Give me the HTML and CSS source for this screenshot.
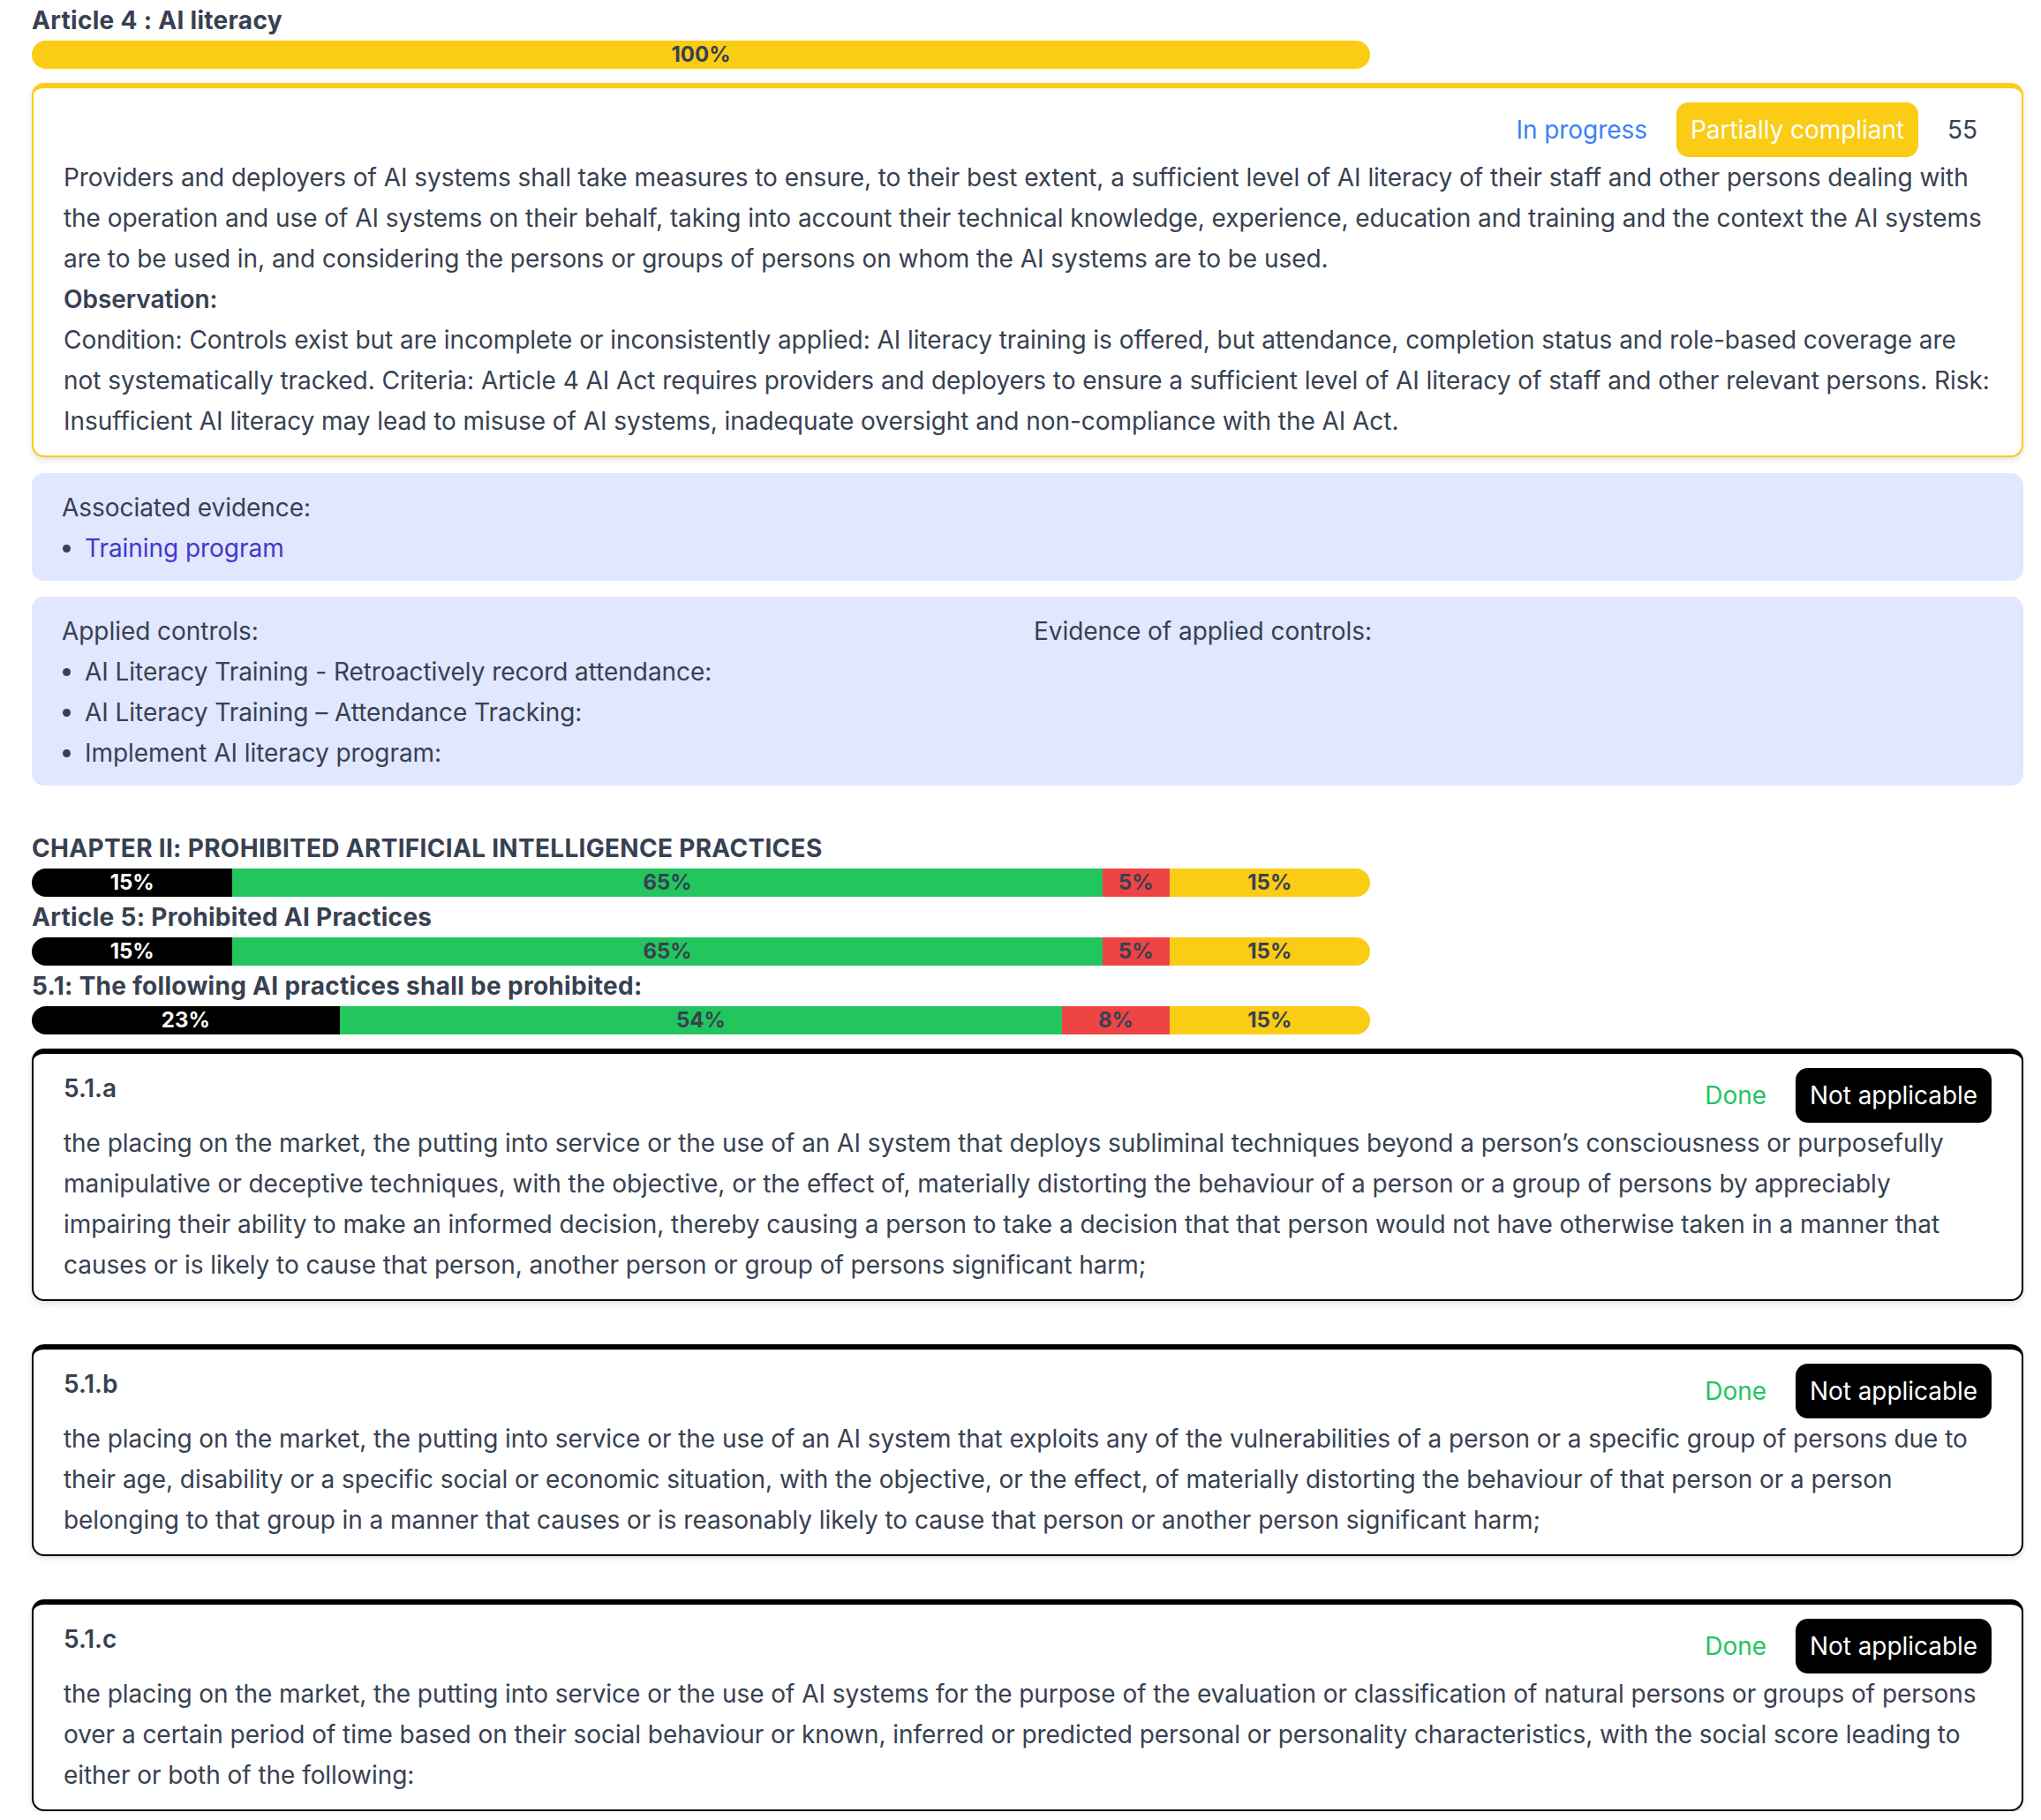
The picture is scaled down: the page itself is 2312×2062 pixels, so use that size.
FILE: index.html
```html
<!DOCTYPE html>
<html lang="en">
<head>
  <meta charset="UTF-8" />
  <meta name="viewport" content="width=device-width, initial-scale=1.0" />
  <title>AI Act audit</title>
  <link rel="stylesheet" href="styles.css">
</head>
<body>
  <div class="page">

    <div class="node">
      <h3 class="node-title">Article 4 : AI literacy</h3>
      <div class="progress">
        <div class="seg seg-yellow" style="width: 100%;">100%</div>
      </div>

      <div class="req-card req-yellow">
        <div class="req-head">
          <span class="ref-id"></span>
          <div class="badges">
            <span class="badge status-progress">In progress</span>
            <span class="badge result-partial">Partially compliant</span>
            <span class="badge score">55</span>
          </div>
        </div>
        <p>Providers and deployers of AI systems shall take measures to ensure, to their best extent, a sufficient level of AI literacy of their staff and other persons dealing with the operation and use of AI systems on their behalf, taking into account their technical knowledge, experience, education and training and the context the AI systems are to be used in, and considering the persons or groups of persons on whom the AI systems are to be used.</p>
        <p class="obs-label">Observation:</p>
        <p>Condition: Controls exist but are incomplete or inconsistently applied: AI literacy training is offered, but attendance, completion status and role-based coverage are not systematically tracked. Criteria: Article 4 AI Act requires providers and deployers to ensure a sufficient level of AI literacy of staff and other relevant persons. Risk: Insufficient AI literacy may lead to misuse of AI systems, inadequate oversight and non-compliance with the AI Act.</p>
      </div>

      <div class="info-box">
        <p>Associated evidence:</p>
        <ul>
          <li><a href="#" class="link">Training program</a></li>
        </ul>
      </div>

      <div class="info-box two-col">
        <div>
          <p>Applied controls:</p>
          <ul>
            <li>AI Literacy Training - Retroactively record attendance:</li>
            <li>AI Literacy Training – Attendance Tracking:</li>
            <li>Implement AI literacy program:</li>
          </ul>
        </div>
        <div>
          <p>Evidence of applied controls:</p>
        </div>
      </div>
    </div>

    <div class="node chapter">
      <h3 class="node-title">CHAPTER II: PROHIBITED ARTIFICIAL INTELLIGENCE PRACTICES</h3>
      <div class="progress">
        <div class="seg seg-black" style="width: 15%;">15%</div>
        <div class="seg seg-green" style="width: 65%;">65%</div>
        <div class="seg seg-red" style="width: 5%;">5%</div>
        <div class="seg seg-yellow" style="width: 15%;">15%</div>
      </div>

      <h3 class="node-title">Article 5: Prohibited AI Practices</h3>
      <div class="progress">
        <div class="seg seg-black" style="width: 15%;">15%</div>
        <div class="seg seg-green" style="width: 65%;">65%</div>
        <div class="seg seg-red" style="width: 5%;">5%</div>
        <div class="seg seg-yellow" style="width: 15%;">15%</div>
      </div>

      <h3 class="node-title">5.1: The following AI practices shall be prohibited:</h3>
      <div class="progress">
        <div class="seg seg-black" style="width: 23%;">23%</div>
        <div class="seg seg-green" style="width: 54%;">54%</div>
        <div class="seg seg-red" style="width: 8%;">8%</div>
        <div class="seg seg-yellow" style="width: 15%;">15%</div>
      </div>

      <div class="req-card req-black">
        <div class="req-head">
          <span class="ref-id">5.1.a</span>
          <div class="badges">
            <span class="badge status-done">Done</span>
            <span class="badge result-na">Not applicable</span>
          </div>
        </div>
        <p>the placing on the market, the putting into service or the use of an AI system that deploys subliminal techniques beyond a person’s consciousness or purposefully manipulative or deceptive techniques, with the objective, or the effect of, materially distorting the behaviour of a person or a group of persons by appreciably impairing their ability to make an informed decision, thereby causing a person to take a decision that that person would not have otherwise taken in a manner that causes or is likely to cause that person, another person or group of persons significant harm;</p>
      </div>

      <div class="req-card req-black">
        <div class="req-head">
          <span class="ref-id">5.1.b</span>
          <div class="badges">
            <span class="badge status-done">Done</span>
            <span class="badge result-na">Not applicable</span>
          </div>
        </div>
        <p>the placing on the market, the putting into service or the use of an AI system that exploits any of the vulnerabilities of a person or a specific group of persons due to their age, disability or a specific social or economic situation, with the objective, or the effect, of materially distorting the behaviour of that person or a person belonging to that group in a manner that causes or is reasonably likely to cause that person or another person significant harm;</p>
      </div>

      <div class="req-card req-black">
        <div class="req-head">
          <span class="ref-id">5.1.c</span>
          <div class="badges">
            <span class="badge status-done">Done</span>
            <span class="badge result-na">Not applicable</span>
          </div>
        </div>
        <p>the placing on the market, the putting into service or the use of AI systems for the purpose of the evaluation or classification of natural persons or groups of persons over a certain period of time based on their social behaviour or known, inferred or predicted personal or personality characteristics, with the social score leading to either or both of the following:</p>
      </div>
    </div>

  </div>
</body>
</html>
```

FILE: styles.css
```css
body {
  margin: 0;
  padding: 0;
  background: #fff;
  color: #374151;
  font-family: Inter, 'Noto Sans', sans-serif;
  font-size: 28px;
  line-height: 46px;
  letter-spacing: -0.05px;
}
.page {
  padding: 0 20px 0 36px;
}
p {
  margin: 0;
}
.node-title {
  margin: 0;
  font-size: 28px;
  font-weight: 700;
  line-height: 46px;
  letter-spacing: 0.3px;
}
.progress {
  display: flex;
  width: 1516px;
  height: 32px;
  border-radius: 16px;
  overflow: hidden;
}
.seg {
  display: flex;
  align-items: center;
  justify-content: center;
  font-size: 24px;
  font-weight: 700;
  line-height: 32px;
  letter-spacing: 0;
  color: #374151;
  white-space: nowrap;
}
.seg-black {
  background: #000;
  color: #fff;
}
.seg-green {
  background: #22c55e;
}
.seg-red {
  background: #ef4444;
}
.seg-yellow {
  background: #facc15;
}
.req-card {
  margin-top: 16px;
  padding: 16px 34px 16px;
  border: 2px solid;
  border-top-width: 6px;
  border-radius: 14px;
  background: #fff;
  box-shadow: 0 4px 8px rgba(0, 0, 0, 0.08), 0 2px 4px rgba(0, 0, 0, 0.05);
}
.req-yellow {
  border-color: #facc15;
}
.req-black {
  border-color: #000;
}
.req-black + .req-black {
  margin-top: 49px;
}
.req-head {
  display: flex;
  justify-content: space-between;
  align-items: flex-start;
}
.ref-id {
  font-weight: 600;
}
.badges {
  display: flex;
  align-items: center;
  gap: 17px;
}
.badge {
  padding: 8px 16px;
  border-radius: 14px;
  white-space: nowrap;
}
.status-progress {
  color: #3b82f6;
}
.status-done {
  color: #22c55e;
}
.result-partial {
  background: #facc15;
  color: #fff;
}
.result-na {
  background: #000;
  color: #fff;
}
.obs-label {
  font-weight: 600;
}
.info-box {
  margin-top: 18px;
  padding: 16px 34px 14px;
  border-radius: 14px;
  background: #e0e7ff;
}
.info-box ul {
  margin: 0;
  padding-left: 26px;
}
.two-col {
  display: grid;
  grid-template-columns: 1fr 1fr;
  gap: 14px;
}
.link {
  color: #4338ca;
  text-decoration: none;
}
.chapter {
  margin-top: 48px;
}
```
